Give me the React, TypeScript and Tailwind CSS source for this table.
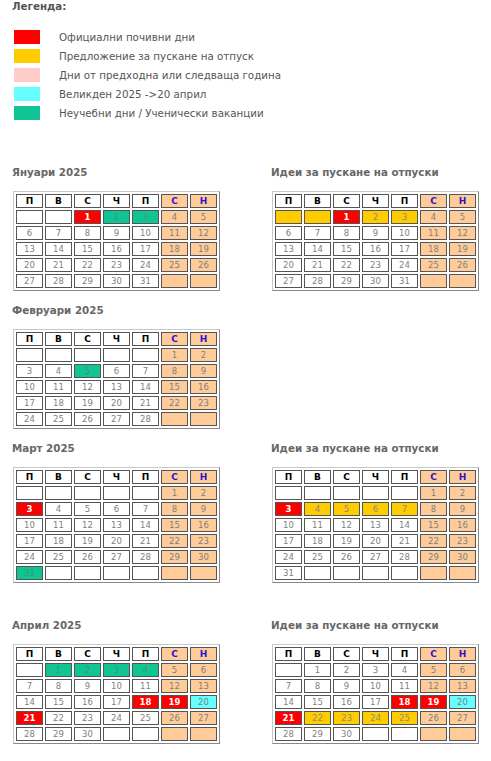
import React from 'react';

type CellType = 'n' | 'w' | 'r' | 'y' | 'g' | 'c';

interface Cell {
  day?: number;
  type: CellType;
}

const cellClass: Record<CellType, string> = {
  n: 'bg-white text-[#808080]',
  w: 'bg-[#ffcc99] text-[#808080]',
  r: 'bg-[#ff0000] text-white font-bold',
  y: 'bg-[#ffcc00] text-[#8a8a8a]',
  g: 'bg-[#10c494] text-[#3a9a78]',
  c: 'bg-[#66ffff] text-[#808080]',
};

// Build the grid of a month: offset = weekday of the 1st (0 = Monday)
const buildMonth = (
  offset: number,
  days: number,
  marks: Record<number, CellType> = {},
  emptyMarks: Record<number, CellType> = {}
): Cell[][] => {
  const total = Math.ceil((offset + days) / 7) * 7;
  const rows: Cell[][] = [];
  for (let i = 0; i < total; i++) {
    const col = i % 7;
    const day = i - offset + 1;
    const base: CellType = col >= 5 ? 'w' : 'n';
    const cell: Cell =
      day >= 1 && day <= days
        ? { day, type: marks[day] || base }
        : { type: emptyMarks[i] || base };
    if (col === 0) rows.push([]);
    rows[rows.length - 1].push(cell);
  }
  return rows;
};

const weekDays = ['П', 'В', 'С', 'Ч', 'П', 'С', 'Н'];

const legend = [
  { color: 'bg-[#ff0000]', label: 'Официални почивни дни' },
  { color: 'bg-[#ffcc00]', label: 'Предложение за пускане на отпуск' },
  { color: 'bg-[#ffcccc]', label: 'Дни от предходна или следваща година' },
  { color: 'bg-[#66ffff]', label: 'Великден 2025 ->20 април' },
  { color: 'bg-[#10c494]', label: 'Неучебни дни / Ученически ваканции' },
];

const MonthTable: React.FC<{ rows: Cell[][] }> = ({ rows }) => (
  <div className="ml-px w-max border border-t-[#c8c8c8] border-l-[#c8c8c8] border-r-[#888] border-b-[#888] p-[2px]">
    <div className="grid grid-cols-[repeat(7,27px)] auto-rows-[14px] gap-[2px] text-[8.5px] leading-[12px]">
      {weekDays.map((d, i) => (
        <div
          key={'h' + i}
          className={`flex items-center justify-center border border-[#555] text-[9px] font-bold ${
            i >= 5 ? 'bg-[#ffcc99] text-[#3311cc]' : 'bg-white text-black'
          }`}
        >
          {d}
        </div>
      ))}
      {rows.flat().map((c, i) => (
        <div
          key={i}
          className={`flex items-center justify-center border border-[#555] ${cellClass[c.type]}`}
        >
          {c.day ?? ''}
        </div>
      ))}
    </div>
  </div>
);

const Section: React.FC<{ title: string; rows: Cell[][] }> = ({ title, rows }) => (
  <div>
    <div className="h-[13px] text-[10.3px] leading-[13px] font-bold text-[#666]">{title}</div>
    <div className="mt-[12px]">
      <MonthTable rows={rows} />
    </div>
  </div>
);

const idea = 'Идеи за пускане на отпуски';

export default function App() {
  const jan = buildMonth(2, 31, { 1: 'r', 2: 'g', 3: 'g' });
  const janIdea = buildMonth(2, 31, { 1: 'r', 2: 'y', 3: 'y' }, { 0: 'y', 1: 'y' });
  const feb = buildMonth(5, 28, { 5: 'g' });
  const mar = buildMonth(5, 31, { 3: 'r', 31: 'g' });
  const marIdea = buildMonth(5, 31, { 3: 'r', 4: 'y', 5: 'y', 6: 'y', 7: 'y' });
  const apr = buildMonth(1, 30, { 1: 'g', 2: 'g', 3: 'g', 4: 'g', 18: 'r', 19: 'r', 20: 'c', 21: 'r' });
  const aprIdea = buildMonth(1, 30, {
    18: 'r', 19: 'r', 20: 'c', 21: 'r', 22: 'y', 23: 'y', 24: 'y', 25: 'y',
  });

  return (
    <div className="min-h-[761px] bg-white pl-[12px] font-['DejaVu_Sans',Verdana,sans-serif]">
      {/* Legend */}
      <div className="h-[13px] text-[10.3px] leading-[13px] font-bold text-[#555]">Легенда:</div>
      <div className="mt-[17px] flex flex-col">
        {legend.map((l) => (
          <div key={l.label} className="flex h-[19px] items-start">
            <div className={`ml-[2px] h-[14px] w-[26px] ${l.color}`} />
            <div className="ml-[19px] text-[10.3px] leading-[14px] text-[#555]">{l.label}</div>
          </div>
        ))}
      </div>

      <div className="mt-[41px] grid grid-cols-[259px_auto]">
        <Section title="Януари 2025" rows={jan} />
        <Section title={idea} rows={janIdea} />
      </div>

      <div className="mt-[13px] grid grid-cols-[259px_auto]">
        <Section title="Февруари 2025" rows={feb} />
      </div>

      <div className="mt-[13px] grid grid-cols-[259px_auto]">
        <Section title="Март 2025" rows={mar} />
        <Section title={idea} rows={marIdea} />
      </div>

      <div className="mt-[36px] grid grid-cols-[259px_auto]">
        <Section title="Април 2025" rows={apr} />
        <Section title={idea} rows={aprIdea} />
      </div>
    </div>
  );
}
